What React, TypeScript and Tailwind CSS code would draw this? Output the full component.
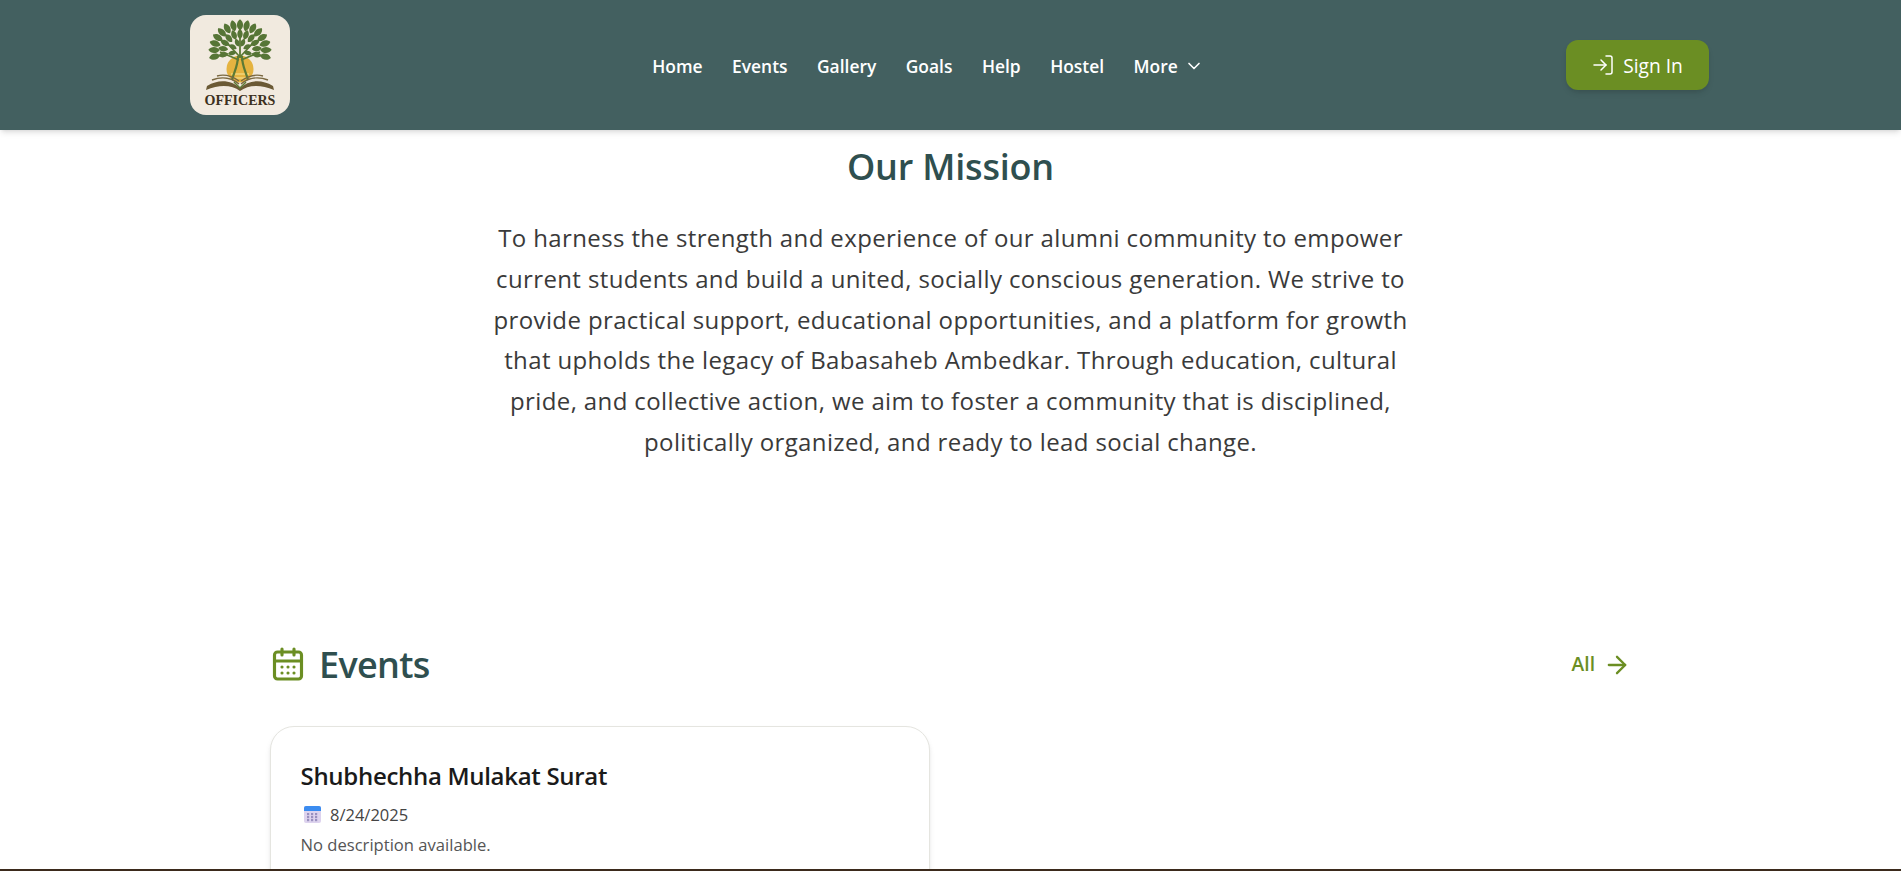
import { ArrowRight, CalendarDays, ChevronDown, LogIn } from "lucide-react";

const navLinks = ["Home", "Events", "Gallery", "Goals", "Help", "Hostel"];

// canopy leaves laid out on three arcs around the crown of the tree
const leaves = [
  { rx: 26, ry: 26, count: 15, size: 1.35 },
  { rx: 17, ry: 17, count: 11, size: 1.2 },
  { rx: 8, ry: 9, count: 6, size: 1 },
].flatMap(({ rx, ry, count, size }) =>
  Array.from({ length: count }, (_, i) => {
    const angle = Math.PI * (0.93 + (i / (count - 1)) * 1.14);
    return {
      x: 50 + Math.cos(angle) * rx,
      y: 35 + Math.sin(angle) * ry,
      rot: (angle * 180) / Math.PI + 90,
      size,
    };
  }),
);

function Logo() {
  return (
    <div className="w-[100px] h-[100px] rounded-2xl bg-[#f1eadf] flex flex-col items-center overflow-hidden">
      <svg viewBox="0 0 100 78" className="w-[100px] h-[78px] mt-[1px] shrink-0" aria-hidden="true">
        <circle cx="50" cy="53" r="13.5" fill="#e5b340" />
        <path d="M42 62 H58 M41 58 H59" stroke="#f1d67a" strokeWidth="1.5" />
        <path d="M48 40 C48 50 44 56 42 64 M52 40 C52 50 56 56 58 64" stroke="#5c7a35" strokeWidth="2.2" fill="none" />
        <path d="M50 42 V18 M50 41 L36 26 M50 41 L64 26 M49 44 L30 36 M51 44 L70 36" stroke="#5c7a35" strokeWidth="1.8" fill="none" />
        {leaves.map(({ x, y, rot, size }) => (
          <path
            key={`${x}-${y}`}
            d="M0 -4.2 C3 -2 3 2 0 4.2 C-3 2 -3 -2 0 -4.2 Z"
            fill="#567536"
            transform={`translate(${x} ${y}) rotate(${rot}) scale(${size})`}
          />
        ))}
        <path d="M50 72 C42 65 30 62 17 70 L16 74 C30 68 42 69 50 75 C58 69 70 68 84 74 L83 70 C70 62 58 65 50 72 Z" fill="#6b5a35" />
        <path d="M49 68 C42 62 32 60 22 64 M49 65 C42 60 34 58 27 60 M51 68 C58 62 68 60 78 64 M51 65 C58 60 66 58 73 60" stroke="#7a6840" strokeWidth="1.4" fill="none" />
        <path d="M44 66 L50 72 L56 66" stroke="#5c7a35" strokeWidth="1.5" fill="none" />
      </svg>
      <span className="font-['Liberation_Serif',serif] font-bold text-[14px] leading-none text-[#3c3020]">OFFICERS</span>
    </div>
  );
}

function CalendarEmoji() {
  return (
    <svg viewBox="0 0 17 17" className="w-[17px] h-[17px] shrink-0" aria-hidden="true">
      <rect x="0" y="0" width="17" height="17" rx="2" fill="#ddd3ee" />
      <path d="M0 5 V2 a2 2 0 0 1 2 -2 H15 a2 2 0 0 1 2 2 V5 Z" fill="#3b8cf0" />
      {[3, 7, 11].map((x) =>
        [7, 10, 13].map((y) => <rect key={`${x}-${y}`} x={x} y={y} width="2.2" height="2.2" fill="#9a90bf" />),
      )}
    </svg>
  );
}

export default function App() {
  return (
    <div className="h-[871px] overflow-hidden flex flex-col bg-white font-['Open_Sans',sans-serif]">
      {/* Header */}
      <header className="h-[130px] shrink-0 bg-[#436060] shadow-md z-10 flex items-center justify-between pl-[190px] pr-[192px]">
        <Logo />
        <nav className="flex items-center gap-[29.5px] text-white font-semibold text-[17.4px] pt-[2px]">
          {navLinks.map((link) => (
            <a key={link} href="#">
              {link}
            </a>
          ))}
          <a href="#" className="flex items-center gap-[6px]">
            More <ChevronDown size={20} />
          </a>
        </nav>
        <button className="w-[143px] h-[50px] rounded-xl bg-[#6b8e23] shadow-md text-white text-[19.2px] flex items-center justify-center gap-2">
          <LogIn size={24} strokeWidth={1.5} className="-ml-[1px]" />
          <span className="pt-[2px]">Sign In</span>
        </button>
      </header>

      <main className="flex-1 min-h-0 overflow-hidden">
        {/* Mission */}
        <section className="flex flex-col items-center text-center pt-[12px]">
          <h2 className="text-[36px] leading-[50px] font-semibold text-[#2f4f4f] tracking-[-0.2px]">Our Mission</h2>
          <p className="mt-[26px] w-[940px] text-[24px] leading-[40.8px] text-[#3a3a3a] tracking-[0.38px]">
            To harness the strength and experience of our alumni community to empower current students and build a
            united, socially conscious generation. We strive to provide practical support, educational opportunities,
            and a platform for growth that upholds the legacy of Babasaheb Ambedkar. Through education, cultural pride,
            and collective action, we aim to foster a community that is disciplined, politically organized, and ready
            to lead social change.
          </p>
        </section>

        {/* Events */}
        <section className="mt-[177px] ml-[270px] mr-[272px]">
          <div className="flex items-center justify-between">
            <div className="flex items-center gap-[13px]">
              <CalendarDays size={36} strokeWidth={2.1} className="text-[#6b8e23] -mt-[2px]" />
              <h2 className="text-[36px] leading-[50px] font-semibold text-[#2f4f4f] tracking-[-0.7px]">Events</h2>
            </div>
            <a href="#" className="flex items-center gap-2 -mr-[2px] text-[#6b8e23] font-semibold text-[19.2px]">
              All <ArrowRight size={28} strokeWidth={2} />
            </a>
          </div>
          <div className="mt-[36px] w-[660px] h-[200px] rounded-3xl border border-[#e5e5e0] shadow-md bg-white px-[29.5px] pt-[33px]">
            <h3 className="text-[24px] leading-[32px] font-semibold text-[#1a1a1a] tracking-[-0.3px]">
              Shubhechha Mulakat Surat
            </h3>
            <p className="mt-[11px] flex items-center gap-[9px] pl-[3.5px] text-[16.5px] leading-6 text-[#444444]">
              <CalendarEmoji />
              8/24/2025
            </p>
            <p className="mt-[6px] text-[16.6px] leading-6 text-[#555555]">No description available.</p>
          </div>
        </section>
      </main>

      {/* Bottom edge */}
      <div className="h-[2px] shrink-0 bg-[#3b2a1c]" />
    </div>
  );
}
